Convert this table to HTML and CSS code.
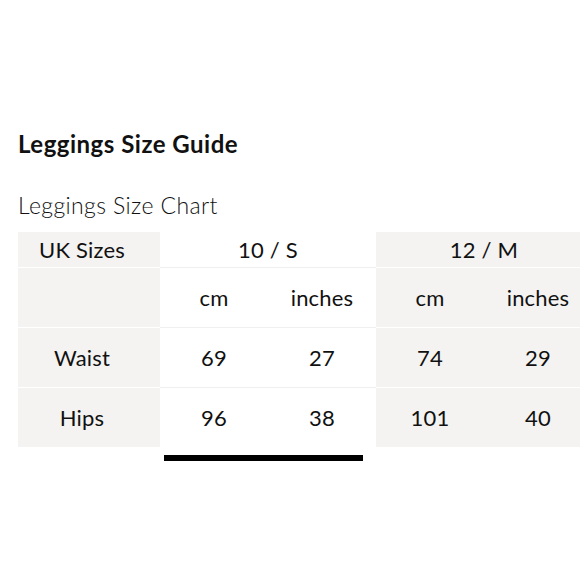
FILE: index.html
```html
<!DOCTYPE html>
<html>
<head>
<meta charset="utf-8">
<link rel="stylesheet" href="styles.css">
</head>
<body>
<main class="page">
  <h1 class="title">Leggings Size Guide</h1>
  <h2 class="subtitle">Leggings Size Chart</h2>
  <div class="scroller">
    <table class="chart">
      <colgroup>
        <col class="c-label">
        <col class="c-val">
        <col class="c-val">
        <col class="c-val">
        <col class="c-val">
      </colgroup>
      <tr class="row-head">
        <th class="label">UK Sizes</th>
        <th class="w" colspan="2">10 / S</th>
        <th class="g" colspan="2">12 / M</th>
      </tr>
      <tr class="row-unit">
        <td class="label"></td>
        <td class="w">cm</td>
        <td class="w">inches</td>
        <td class="g">cm</td>
        <td class="g">inches</td>
      </tr>
      <tr class="row-data">
        <td class="label">Waist</td>
        <td class="w">69</td>
        <td class="w">27</td>
        <td class="g">74</td>
        <td class="g">29</td>
      </tr>
      <tr class="row-data last">
        <td class="label">Hips</td>
        <td class="w">96</td>
        <td class="w">38</td>
        <td class="g">101</td>
        <td class="g">40</td>
      </tr>
    </table>
  </div>
  <div class="indicator"><div class="thumb"></div></div>
</main>
</body>
</html>
```
FILE: styles.css
```css
html, body {
  margin: 0;
  padding: 0;
  background: #ffffff;
  overflow: hidden;
}
body {
  font-family: Lato, "Open Sans", sans-serif;
  color: #111111;
}
.page {
  padding: 128px 0 0 18px;
}
.title {
  margin: 0;
  font-size: 24px;
  font-weight: 700;
  line-height: 32px;
  letter-spacing: 0.5px;
}
.subtitle {
  margin: 29px 0 0 0;
  font-size: 23px;
  font-weight: 300;
  line-height: 32px;
  letter-spacing: 0.4px;
}
.scroller {
  margin-top: 11px;
  overflow: hidden;
  width: 562px;
}
.chart {
  border-collapse: collapse;
  table-layout: fixed;
  width: 574px;
  font-size: 22px;
  font-weight: 400;
  letter-spacing: 0.2px;
}
.c-label { width: 142px; }
.c-val { width: 108px; }
.chart th, .chart td {
  padding: 0;
  text-align: center;
  font-weight: 400;
}
.chart .label {
  background: #f4f3f1;
  padding-right: 14px;
}
.chart .w { background: #ffffff; }
.chart .g { background: #f4f3f1; }
.row-head th { height: 35px; }
.row-unit td { height: 59px; }
.row-data td { height: 59px; }
.row-head th, .row-unit td, .row-data td {
  border-bottom: 1px solid #ffffff;
}
.row-head th.w, .row-unit td.w, .row-data td.w {
  border-bottom-color: #efefef;
}
.row-data.last td { border-bottom: none; }
.indicator {
  margin-top: 8px;
  padding-left: 146px;
}
.thumb {
  width: 199px;
  height: 6px;
  background: #000000;
}
```
